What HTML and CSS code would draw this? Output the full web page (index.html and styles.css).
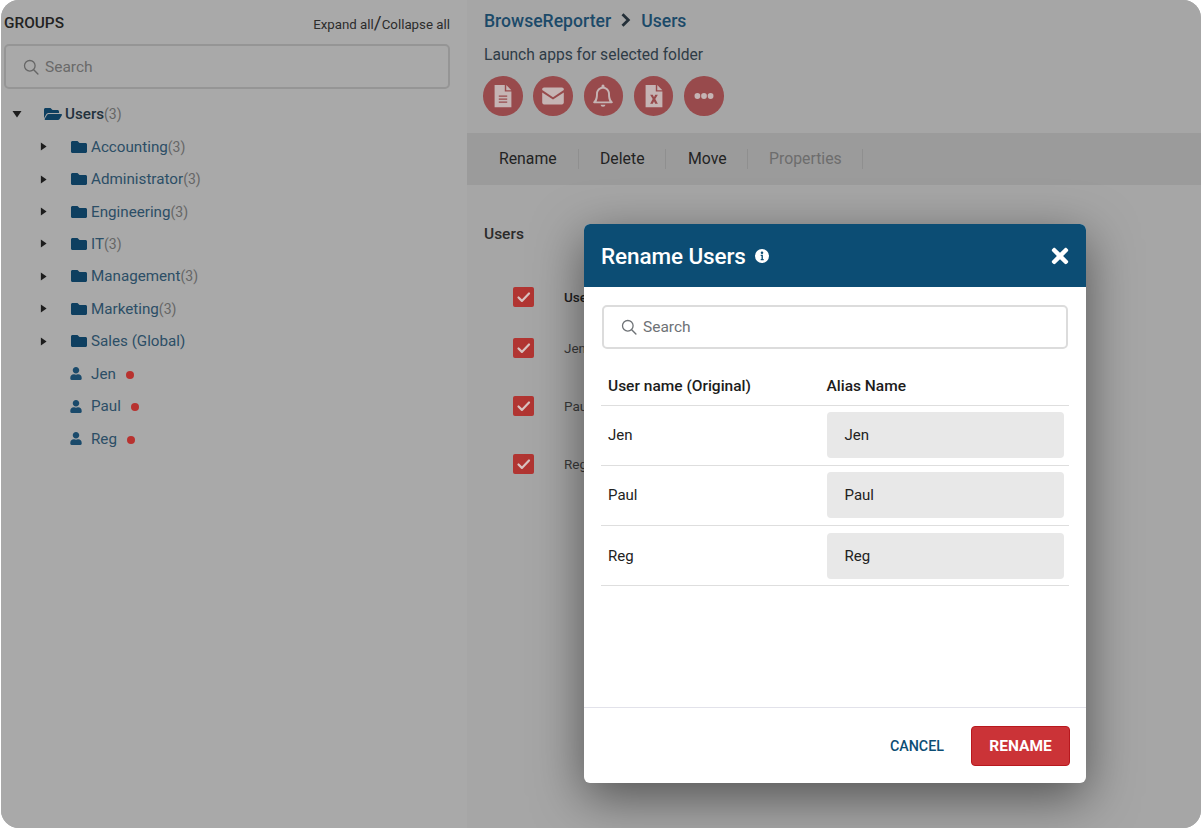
FILE: index.html
```
<!DOCTYPE html>
<html lang="en">
<head>
<meta charset="utf-8">
<title>Rename Users</title>
<link rel="stylesheet" href="styles.css">
</head>
<body>
<svg class="defs" aria-hidden="true">
  <symbol id="i-folder" viewBox="0 0 512 512"><path d="M464 128H272l-64-64H48C21.49 64 0 85.49 0 112v288c0 26.51 21.49 48 48 48h416c26.51 0 48-21.49 48-48V176c0-26.51-21.49-48-48-48z"/></symbol>
  <symbol id="i-open" viewBox="0 0 576 512"><path d="M572.694 292.093L500.27 416.248A63.997 63.997 0 0 1 444.989 448H45.025c-18.523 0-30.064-20.093-20.731-36.093l72.424-124.155A64 64 0 0 1 152 256h399.964c18.523 0 30.064 20.093 20.73 36.093zM152 224h328v-48c0-26.51-21.49-48-48-48H272l-64-64H48C21.49 64 0 85.49 0 112v278.046l69.077-118.418C86.214 242.25 117.989 224 152 224z"/></symbol>
  <symbol id="i-user" viewBox="0 0 448 512"><path d="M224 256c70.7 0 128-57.3 128-128S294.7 0 224 0 96 57.3 96 128s57.3 128 128 128zm89.6 32h-16.7c-22.2 10.2-46.9 16-72.9 16s-50.6-5.8-72.9-16h-16.7C60.2 288 0 348.2 0 422.4V464c0 26.5 21.5 48 48 48h352c26.5 0 48-21.5 48-48v-41.6c0-74.2-60.2-134.4-134.4-134.4z"/></symbol>
  <symbol id="i-search" viewBox="0 0 16 16"><circle cx="6.8" cy="6.8" r="5.3" fill="none" stroke="currentColor" stroke-width="1.3"/><path d="M10.7 10.7l4.2 4.2" stroke="currentColor" stroke-width="1.4" stroke-linecap="round"/></symbol>
  <symbol id="i-check" viewBox="0 0 20 20"><path d="M5 10.5l3.4 3.4L15.5 6.5" fill="none" stroke="currentColor" stroke-width="2.2" stroke-linecap="round" stroke-linejoin="round"/></symbol>
  <symbol id="i-right" viewBox="0 0 8 10"><path d="M1 0.5l6.5 4.5L1 9.5z"/></symbol>
  <symbol id="i-down" viewBox="0 0 10 8"><path d="M0.5 1h9L5 7.5z"/></symbol>
</svg>

<div class="app">
  <aside class="sidebar">
    <div class="side-head">
      <span class="groups">GROUPS</span>
      <span class="expand">Expand all<span class="slash">/</span>Collapse all</span>
    </div>
    <div class="search search-dim">
      <svg class="search-ico"><use href="#i-search"/></svg>
      <span>Search</span>
    </div>
    <ul class="tree">
      <li class="row root"><svg class="arrow-down"><use href="#i-down"/></svg><svg class="open"><use href="#i-open"/></svg><span class="name strong">Users</span><span class="count">(3)</span></li>
      <li class="row child"><svg class="arrow"><use href="#i-right"/></svg><svg class="folder"><use href="#i-folder"/></svg><span class="name">Accounting</span><span class="count">(3)</span></li>
      <li class="row child"><svg class="arrow"><use href="#i-right"/></svg><svg class="folder"><use href="#i-folder"/></svg><span class="name">Administrator</span><span class="count">(3)</span></li>
      <li class="row child"><svg class="arrow"><use href="#i-right"/></svg><svg class="folder"><use href="#i-folder"/></svg><span class="name">Engineering</span><span class="count">(3)</span></li>
      <li class="row child"><svg class="arrow"><use href="#i-right"/></svg><svg class="folder"><use href="#i-folder"/></svg><span class="name">IT</span><span class="count">(3)</span></li>
      <li class="row child"><svg class="arrow"><use href="#i-right"/></svg><svg class="folder"><use href="#i-folder"/></svg><span class="name">Management</span><span class="count">(3)</span></li>
      <li class="row child"><svg class="arrow"><use href="#i-right"/></svg><svg class="folder"><use href="#i-folder"/></svg><span class="name">Marketing</span><span class="count">(3)</span></li>
      <li class="row child"><svg class="arrow"><use href="#i-right"/></svg><svg class="folder"><use href="#i-folder"/></svg><span class="name">Sales (Global)</span></li>
      <li class="row leaf"><svg class="user"><use href="#i-user"/></svg><span class="name">Jen</span><i class="dot"></i></li>
      <li class="row leaf"><svg class="user"><use href="#i-user"/></svg><span class="name">Paul</span><i class="dot"></i></li>
      <li class="row leaf"><svg class="user"><use href="#i-user"/></svg><span class="name">Reg</span><i class="dot"></i></li>
    </ul>
  </aside>

  <main class="main">
    <div class="main-top">
      <div class="crumbs"><span>BrowseReporter</span><svg class="chev" viewBox="0 0 10 12"><path d="M2 1l5 5-5 5" fill="none" stroke="currentColor" stroke-width="2.4"/></svg><span>Users</span></div>
      <div class="launch">Launch apps for selected folder</div>
      <div class="apps">
        <span class="app-btn"><svg viewBox="0 0 20 20"><path d="M3 .8h8.500v5.500H17v13H3z"/><path d="M12.700 .8L17 5.200h-4.300z"/><path class="cut" d="M6.500 9.500h7v1.200h-7zM6.500 12h7v1.200h-7zM6.500 14.500h7v1.200h-7z"/></svg></span>
        <span class="app-btn"><svg viewBox="0 0 20 20"><path d="M1 4.500C1 3.700 1.700 3 2.500 3h15c.8 0 1.500.7 1.500 1.500v.6L10 11 1 5.100z"/><path d="M1 7l9 5.900L19 7v8.500c0 .8-.7 1.500-1.500 1.500h-15C1.700 17 1 16.300 1 15.500z"/></svg></span>
        <span class="app-btn"><svg viewBox="0 0 20 20"><path d="M10 .5a1.300 1.300 0 0 1 1.300 1.300v.7c2.700.6 4.500 2.900 4.500 5.700 0 4.200 1.200 5.500 2.200 6.600.4.500.1 1.200-.6 1.200H2.600c-.7 0-1-.7-.6-1.200 1-1.100 2.200-2.400 2.200-6.600 0-2.800 1.800-5.100 4.500-5.700v-.7A1.300 1.300 0 0 1 10 .5zM4.600 14.500h10.800c-.7-1.300-1.200-3.100-1.200-6.300 0-2.300-1.900-4.200-4.200-4.200S5.800 5.900 5.800 8.200c0 3.200-.5 5-1.200 6.300z" fill-rule="evenodd"/><path d="M8 17.200h4a2 1.800 0 0 1-4 0z"/></svg></span>
        <span class="app-btn"><svg viewBox="0 0 20 20"><path d="M3 .8h8.500v5.500H17v13H3z"/><path d="M12.700 .8L17 5.200h-4.300z"/><path class="cut" d="M6.800 9h2.200l1 2 1-2h2.200l-2.100 3.500L13.200 16.500H11l-1-2.100-1 2.100H6.800l2.100-4z"/></svg></span>
        <span class="app-btn"><svg viewBox="0 0 20 20"><circle cx="4.500" cy="10" r="2.400"/><circle cx="10" cy="10" r="2.400"/><circle cx="15.500" cy="10" r="2.400"/></svg></span>
      </div>
    </div>
    <nav class="toolbar">
      <span class="tool t1">Rename</span>
      <span class="tool t2">Delete</span>
      <span class="tool t3">Move</span>
      <span class="tool t4 off">Properties</span>
    </nav>
    <h2 class="section">Users</h2>
    <ul class="checks">
      <li class="check-row r1"><span class="box"><svg><use href="#i-check"/></svg></span><span class="cell head">User name</span></li>
      <li class="check-row r2"><span class="box"><svg><use href="#i-check"/></svg></span><span class="cell">Jen</span></li>
      <li class="check-row r3"><span class="box"><svg><use href="#i-check"/></svg></span><span class="cell">Paul</span></li>
      <li class="check-row r3"><span class="box"><svg><use href="#i-check"/></svg></span><span class="cell">Reg</span></li>
    </ul>
  </main>

  <section class="modal">
    <header class="modal-head">
      <h1>Rename Users</h1>
      <svg class="info" viewBox="0 0 14 14"><path fill-rule="evenodd" d="M7 0a7 7 0 1 1 0 14A7 7 0 0 1 7 0zM5.700 5.800v1.300h.8v2.800h-.8v1.300h3v-1.300h-.8V5.800zM7 2.500a1.300 1.300 0 1 0 0 2.600 1.300 1.300 0 0 0 0-2.600z"/></svg>
      <svg class="close" viewBox="0 0 352 512"><path d="M242.72 256l100.07-100.07c12.28-12.28 12.28-32.19 0-44.48l-22.24-22.24c-12.28-12.28-32.19-12.28-44.48 0L176 189.28 75.93 89.21c-12.28-12.28-32.19-12.28-44.48 0L9.21 111.45c-12.28 12.28-12.28 32.19 0 44.48L109.28 256 9.21 356.07c-12.28 12.28-12.28 32.19 0 44.48l22.24 22.24c12.28 12.28 32.2 12.28 44.48 0L176 322.72l100.07 100.07c12.28 12.28 32.2 12.28 44.48 0l22.24-22.24c12.28-12.28 12.28-32.19 0-44.48L242.72 256z"/></svg>
    </header>
    <div class="modal-body">
      <div class="search search-light">
        <svg class="search-ico"><use href="#i-search"/></svg>
        <span>Search</span>
      </div>
      <div class="tbl">
        <div class="tr th"><span class="c1">User name (Original)</span><span>Alias Name</span></div>
        <div class="tr"><span class="c1">Jen</span><span class="alias">Jen</span></div>
        <div class="tr"><span class="c1">Paul</span><span class="alias">Paul</span></div>
        <div class="tr"><span class="c1">Reg</span><span class="alias">Reg</span></div>
      </div>
    </div>
    <footer class="modal-foot">
      <span class="cancel">CANCEL</span>
      <span class="rename">RENAME</span>
    </footer>
  </section>
</div>
</body>
</html>
```

FILE: styles.css
```
* { box-sizing: border-box; }
html, body { margin: 0; padding: 0; background: #fff; }
body { font-family: Roboto, "Liberation Sans", sans-serif; color: #222; width: 1201px; height: 829px; overflow: hidden; }
ul { list-style: none; margin: 0; padding: 0; }
.defs { position: absolute; width: 0; height: 0; }

.app { position: relative; display: flex; width: 1200px; height: 828px; margin-left: 1px; border-radius: 18px; overflow: hidden; background: #a8a8a8; }

.sidebar { width: 466px; flex: none; padding: 0 17px 0 3px; background: #a9a9a9; }
.side-head { display: flex; justify-content: space-between; align-items: center; height: 44px; padding-top: 1px; }
.groups { font-size: 15.400px; font-weight: 500; color: #222; }
.expand { font-size: 13.300px; color: #2c2c2c; }
.slash { font-size: 19px; margin: 0; line-height: 1; }

.search { display: flex; align-items: center; border-radius: 5px; border: 2px solid; font-size: 15.500px; }
.search-ico { width: 16px; height: 16px; margin-right: 6px; }
.search-dim { height: 45px; padding: 1px 0 0 17px; border-color: #959595; color: #6a6a6a; }
.search-dim .search-ico { color: #666; }

.tree { margin-top: 9px; }
.row { display: flex; align-items: center; height: 32.450px; font-size: 15.200px; color: #2c4e66; }
.root { padding-left: 8px; }
.child { padding-left: 36px; }
.leaf { padding-left: 66px; }
.arrow-down { width: 10px; height: 8px; margin-right: 22px; fill: #1d1d1d; }
.arrow { width: 7px; height: 9px; margin-right: 24px; fill: #1d1d1d; }
.open { width: 18px; height: 16px; margin-right: 3px; fill: #0e3f60; }
.folder { width: 16px; height: 16px; margin-right: 4px; fill: #0e3f60; }
.user { width: 12px; height: 13px; margin-right: 9px; fill: #1a4a6b; }
.name { white-space: nowrap; }
.strong { font-weight: 500; color: #23323d; }
.count { color: #666; font-size: 14px; }
.dot { width: 8px; height: 8px; margin-left: 10px; margin-top: 2px; border-radius: 50%; background: #b8322f; }

.main { flex: 1; background: #a6a6a6; }
.main-top { height: 133px; padding: 10px 0 0 17px; }
.crumbs { display: flex; align-items: center; height: 22px; gap: 9px; font-size: 17.600px; font-weight: 500; color: #1c4a69; }
.chev { width: 12px; height: 14px; margin-top: -3px; color: #232f38; }
.launch { margin-top: 12px; font-size: 15.600px; line-height: 22px; color: #2e3c46; }
.apps { display: flex; gap: 10.700px; margin: 10px 0 0 -1px; }
.app-btn { display: flex; align-items: center; justify-content: center; width: 39.600px; height: 39.600px; border-radius: 50%; background: #984a4c; }
.app-btn svg { width: 24px; height: 24px; fill: #c5b4b4; }
.app-btn .cut { fill: #984a4c; }

.toolbar { display: flex; align-items: center; height: 52px; padding-bottom: 1px; background: #9b9b9b; }
.tool { display: flex; align-items: center; height: 20px; font-size: 15.800px; color: #232323; border-right: 1px solid #8f8f8f; }
.t1 { width: 112px; padding-left: 32px; }
.t2 { width: 87px; padding-left: 21px; }
.t3 { width: 82px; padding-left: 22px; }
.t4 { width: 115px; padding-left: 21px; }
.off { color: #6d6d6d; }

.section { margin: 39px 0 0 17px; font-size: 15.500px; line-height: 20px; font-weight: 500; color: #2b2b2b; }
.checks { padding-left: 46px; margin-top: 43px; }
.check-row { display: flex; align-items: center; gap: 30px; height: 20px; font-size: 13.500px; color: #3a3a3a; }
.r2 { margin-top: 31px; }
.r3 { margin-top: 38px; }
.box { flex: none; width: 21px; height: 20px; border-radius: 2px; background: #b13532; color: #d9c2c0; }
.box svg { display: block; width: 21px; height: 20px; }
.head { font-weight: 500; color: #1e1e1e; }

.modal { position: absolute; left: 583px; top: 224px; display: flex; flex-direction: column; width: 502px; height: 559px; background: #fff; border-radius: 6px; box-shadow: 0 14px 50px rgba(0, 0, 0, .5); overflow: hidden; }
.modal-head { display: flex; align-items: center; flex: none; height: 63px; padding: 0 17px; background: #0c4d74; color: #fff; }
.modal-head h1 { margin: 1px 0 0; font-size: 22.500px; line-height: 1; font-weight: 500; letter-spacing: -.1px; }
.info { width: 14px; height: 14px; margin-left: 9px; fill: #fff; }
.close { width: 18px; height: 24px; margin-left: auto; fill: #fff; }

.modal-body { flex: 1; padding: 18px 17px 0 17px; }
.search-light { width: 466px; height: 44px; margin-left: 1px; padding-left: 17px; border-color: #dcdcdc; color: #6e7276; }
.tbl { margin-top: 16px; }
.tr { display: flex; align-items: center; height: 60.300px; padding-left: 7px; font-size: 15px; color: #222; border-bottom: 1px solid #dedede; }
.th { height: 40.500px; padding-top: 2px; font-weight: 500; color: #1c1c1c; font-size: 15.500px; }
.c1 { width: 218.500px; flex: none; }
.alias { display: flex; align-items: center; width: 237px; height: 46px; padding-left: 18px; background: #e8e8e8; border-radius: 4px; }

.modal-foot { display: flex; align-items: center; justify-content: flex-end; flex: none; height: 76px; padding: 0 16px 0 0; border-top: 1px solid #e2e2ea; }
.cancel { margin-right: 27px; font-size: 14.300px; font-weight: 500; color: #0c4d74; }
.rename { display: flex; align-items: center; justify-content: center; width: 99px; height: 40px; border: 1px solid #b8181e; border-radius: 4px; background: #cb3337; color: #fff; font-size: 15.500px; font-weight: 700; }
```
